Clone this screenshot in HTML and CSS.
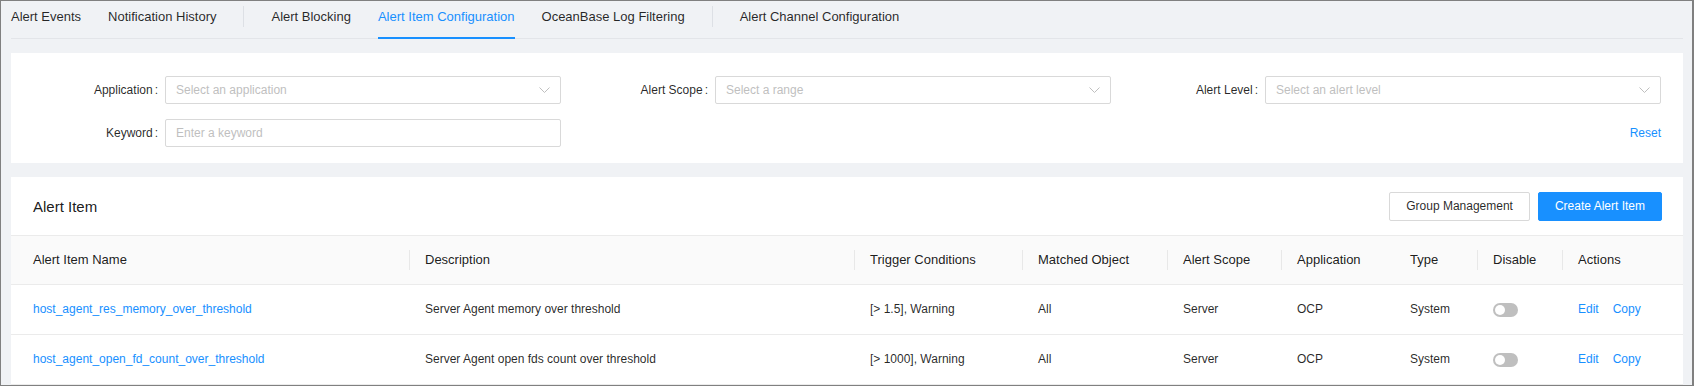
FILE: index.html
```html
<!DOCTYPE html>
<html>
<head>
  <title>Alert Item Configuration</title>
  <link rel="stylesheet" href="styles.css">
</head>
<body>
  <div class="frame">
    <nav class="tabs">
      <a href="#" class="tab">Alert Events</a>
      <a href="#" class="tab">Notification History</a>
      <span class="tab-divider"></span>
      <a href="#" class="tab">Alert Blocking</a>
      <a href="#" class="tab active">Alert Item Configuration</a>
      <a href="#" class="tab">OceanBase Log Filtering</a>
      <span class="tab-divider"></span>
      <a href="#" class="tab">Alert Channel Configuration</a>
    </nav>

    <div class="card filter-card">
      <div class="filter-grid">
        <div class="field">
          <label class="field-label">Application<span class="colon">:</span></label>
          <div class="select">
            <span class="placeholder">Select an application</span>
            <svg class="chevron" width="11" height="7" viewBox="0 0 11 7"><path d="M0.5 0.5 L5.5 5.5 L10.5 0.5" fill="none" stroke="#bfbfbf"/></svg>
          </div>
        </div>
        <div class="field">
          <label class="field-label">Alert Scope<span class="colon">:</span></label>
          <div class="select">
            <span class="placeholder">Select a range</span>
            <svg class="chevron" width="11" height="7" viewBox="0 0 11 7"><path d="M0.5 0.5 L5.5 5.5 L10.5 0.5" fill="none" stroke="#bfbfbf"/></svg>
          </div>
        </div>
        <div class="field">
          <label class="field-label">Alert Level<span class="colon">:</span></label>
          <div class="select">
            <span class="placeholder">Select an alert level</span>
            <svg class="chevron" width="11" height="7" viewBox="0 0 11 7"><path d="M0.5 0.5 L5.5 5.5 L10.5 0.5" fill="none" stroke="#bfbfbf"/></svg>
          </div>
        </div>
        <div class="field">
          <label class="field-label" for="keywordInput">Keyword<span class="colon">:</span></label>
          <input type="text" class="input" id="keywordInput" placeholder="Enter a keyword">
        </div>
        <div class="field"></div>
        <div class="field reset-cell">
          <a href="#" class="link">Reset</a>
        </div>
      </div>
    </div>

    <div class="card list-card">
      <div class="list-header">
        <h2>Alert Item</h2>
        <div class="list-actions">
          <button class="btn">Group Management</button>
          <button class="btn btn-primary">Create Alert Item</button>
        </div>
      </div>
      <table class="alert-table">
        <colgroup>
          <col style="width: 398px">
          <col style="width: 445px">
          <col style="width: 168px">
          <col style="width: 145px">
          <col style="width: 114px">
          <col style="width: 113px">
          <col style="width: 83px">
          <col style="width: 85px">
          <col style="width: 121px">
        </colgroup>
        <thead>
          <tr>
            <th>Alert Item Name</th>
            <th class="sep">Description</th>
            <th class="sep">Trigger Conditions</th>
            <th class="sep">Matched Object</th>
            <th class="sep">Alert Scope</th>
            <th class="sep">Application</th>
            <th>Type</th>
            <th class="sep">Disable</th>
            <th class="sep">Actions</th>
          </tr>
        </thead>
        <tbody>
          <tr>
            <td><a href="#" class="link">host_agent_res_memory_over_threshold</a></td>
            <td>Server Agent memory over threshold</td>
            <td>[&gt; 1.5], Warning</td>
            <td>All</td>
            <td>Server</td>
            <td>OCP</td>
            <td>System</td>
            <td><span class="switch"><span class="switch-knob"></span></span></td>
            <td><a href="#" class="link action">Edit</a><a href="#" class="link action">Copy</a></td>
          </tr>
          <tr>
            <td><a href="#" class="link">host_agent_open_fd_count_over_threshold</a></td>
            <td>Server Agent open fds count over threshold</td>
            <td>[&gt; 1000], Warning</td>
            <td>All</td>
            <td>Server</td>
            <td>OCP</td>
            <td>System</td>
            <td><span class="switch"><span class="switch-knob"></span></span></td>
            <td><a href="#" class="link action">Edit</a><a href="#" class="link action">Copy</a></td>
          </tr>
        </tbody>
      </table>
    </div>
  </div>
</body>
</html>
```

FILE: styles.css
```css
body {
  margin: 0;
  font-family: "Liberation Sans", Arial, sans-serif;
  font-size: 12px;
  color: rgba(0, 0, 0, 0.85);
  overflow: hidden;
}

.frame {
  height: 386px;
  box-sizing: border-box;
  border: 1px solid #808080;
  border-right-width: 2px;
  background-color: #f0f2f5;
  padding: 0 9px 0 10px;
  overflow: hidden;
}

/* tabs */
.tabs {
  display: flex;
  align-items: flex-start;
  gap: 27px;
  height: 38px;
  box-sizing: border-box;
  border-bottom: 1px solid #e3e5e9;
}

.tab {
  height: 38px;
  box-sizing: border-box;
  padding-top: 8px;
  line-height: 16px;
  font-size: 13px;
  color: rgba(0, 0, 0, 0.85);
  text-decoration: none;
  border-bottom: 2px solid transparent;
  white-space: nowrap;
}

.tab.active {
  color: #1890ff;
  border-bottom-color: #1890ff;
}

.tab-divider {
  width: 1px;
  height: 21px;
  margin-top: 5px;
  background-color: #dde0e5;
}

/* cards */
.card {
  background-color: #fff;
  margin-top: 14px;
}

.filter-card {
  padding: 23px 22px 16px 20px;
}

.filter-grid {
  display: grid;
  grid-template-columns: repeat(3, 1fr);
  column-gap: 20px;
  row-gap: 15px;
}

.field {
  display: flex;
  align-items: center;
  height: 28px;
}

.field-label {
  width: 134px;
  flex: none;
  box-sizing: border-box;
  padding-right: 7px;
  text-align: right;
  color: rgba(0, 0, 0, 0.85);
}

.field-label .colon {
  margin-left: 2px;
}

.select,
.input {
  flex: 1;
  min-width: 0;
  height: 28px;
  box-sizing: border-box;
  border: 1px solid #d9d9d9;
  border-radius: 2px;
  padding: 0 10px;
  background: #fff;
  font-family: inherit;
  font-size: 12px;
}

.select {
  display: flex;
  align-items: center;
}

.placeholder,
.input::placeholder {
  color: #bfbfbf;
}

.chevron {
  margin-left: auto;
}

.reset-cell {
  justify-content: flex-end;
}

.link {
  color: #1890ff;
  text-decoration: none;
}

/* list */
.list-header {
  height: 59px;
  box-sizing: border-box;
  display: flex;
  align-items: center;
  justify-content: space-between;
  padding: 0 21px 0 22px;
  border-bottom: 1px solid #ebebeb;
}

.list-header h2 {
  margin: 0;
  font-size: 15px;
  font-weight: normal;
  color: rgba(0, 0, 0, 0.9);
}

.list-actions {
  display: flex;
  gap: 8px;
}

.btn {
  height: 29px;
  padding: 0 16px;
  font-family: inherit;
  font-size: 12px;
  color: rgba(0, 0, 0, 0.85);
  background-color: #fff;
  border: 1px solid #d9d9d9;
  border-radius: 2px;
  cursor: pointer;
}

.btn-primary {
  color: #fff;
  background-color: #1890ff;
  border-color: #1890ff;
}

.alert-table {
  width: 100%;
  table-layout: fixed;
  border-collapse: separate;
  border-spacing: 0;
}

.alert-table th {
  padding: 16px 16px;
  line-height: 16px;
  font-size: 13px;
  font-weight: normal;
  text-align: left;
  color: rgba(0, 0, 0, 0.9);
  background-color: #fafafa;
  border-bottom: 1px solid #ebebeb;
  white-space: nowrap;
}

.alert-table th.sep {
  background: linear-gradient(#e8e8e8, #e8e8e8) no-repeat left center / 1px 20px, #fafafa;
}

.alert-table td {
  padding: 17px 16px;
  line-height: 15px;
  border-bottom: 1px solid #ebebeb;
  white-space: nowrap;
}

.alert-table th:first-child,
.alert-table td:first-child {
  padding-left: 22px;
}

.switch {
  display: inline-block;
  width: 25px;
  height: 14px;
  box-sizing: border-box;
  padding: 2px;
  border-radius: 7px;
  background-color: #bfbfbf;
  vertical-align: middle;
}

.switch-knob {
  display: block;
  width: 10px;
  height: 10px;
  border-radius: 50%;
  background-color: #fff;
}

.action + .action {
  margin-left: 14px;
}
```
